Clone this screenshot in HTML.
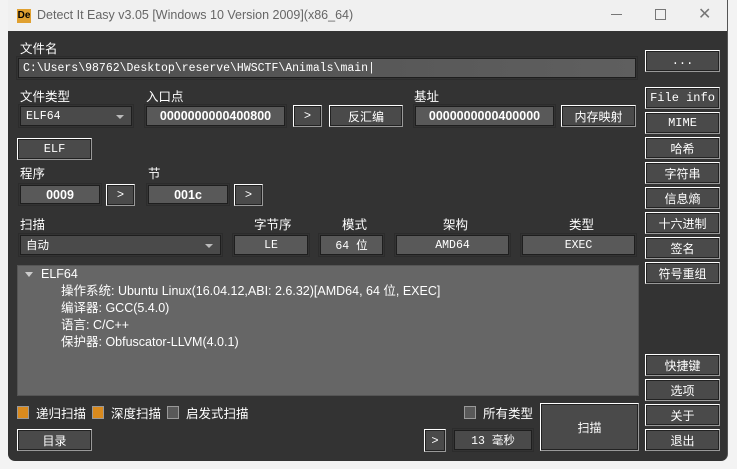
<!DOCTYPE html>
<html><head><meta charset="utf-8"><style>
*{box-sizing:border-box;margin:0;padding:0}
body{width:737px;height:469px;background:#f3f3f3;position:relative;overflow:hidden;font-family:"Liberation Sans","Noto Sans CJK SC",sans-serif;font-size:12px;color:#fff}
.win{position:absolute;left:8px;top:0;width:720px;height:461px;background:#333;border-radius:0 0 7px 7px;overflow:hidden;border-right:1px solid #555}
.tb{position:absolute;left:0;top:0;width:720px;height:31px;background:#f0f0f0;color:#666;font-size:12.5px}
.a{position:absolute}
.lbl{position:absolute;font-size:12.5px;color:#fff;font-family:"Noto Sans CJK SC",sans-serif;line-height:14px}
.btn{position:absolute;background:#4a4a4a;border:1px solid;border-color:#fff #999 #999 #fff;box-shadow:inset 0 0 0 1px #222;color:#fff;text-align:center;font-family:"Liberation Mono","Noto Sans CJK SC",monospace;font-size:12px;display:flex;align-items:center;justify-content:center}
.fld{position:absolute;background:#595959;border:1px solid #1e1e1e;outline:1px solid #2c2c2c;outline-offset:1px;color:#fff;display:flex;align-items:center;justify-content:center;font-family:"Liberation Mono","Noto Sans CJK SC",monospace;font-size:11.5px}
.bold{font-family:"Liberation Sans",sans-serif;font-weight:bold;font-size:12.5px}
.combo{justify-content:flex-start;padding-left:5px}
.combo::after{content:"";position:absolute;right:7px;top:8px;border:4px solid transparent;border-top:4px solid #bbb}
.cb{position:absolute;width:12px;height:13px;border:1px solid #999}
</style></head><body>
<div class="win">
<div class="tb">
 <div class="a" style="left:9px;top:9px;width:14px;height:14px;background:#e0a030;color:#000;font:bold 10px 'Liberation Sans';line-height:14px;text-align:center;">De</div>
 <div class="a" style="left:29px;top:8px;">Detect It Easy v3.05 [Windows 10 Version 2009](x86_64)</div>
 <div class="a" style="left:603px;top:14px;width:11px;height:1px;background:#777"></div>
 <div class="a" style="left:647px;top:9px;width:11px;height:11px;border:1px solid #777"></div>
 <div class="a" style="left:690px;top:4px;font-size:16px;color:#777">✕</div>
</div>
<div class="lbl" style="left:12px;top:41px">文件名</div>
<div class="fld" style="left:10px;top:58px;width:618px;height:20px;justify-content:flex-start;padding-left:4px;background:linear-gradient(90deg,#4e4e4e,#5f5f5f)">C:\Users\98762\Desktop\reserve\HWSCTF\Animals\main|</div>
<div class="btn" style="left:637px;top:50px;width:75px;height:22px">...</div>
<div class="lbl" style="left:12px;top:89px">文件类型</div>
<div class="fld combo" style="left:12px;top:106px;width:112px;height:20px;background:#4a4a4a">ELF64</div>
<div class="lbl" style="left:138px;top:89px">入口点</div>
<div class="fld bold" style="left:138px;top:106px;width:139px;height:20px">0000000000400800</div>
<div class="btn" style="left:285px;top:105px;width:29px;height:22px">&gt;</div>
<div class="btn" style="left:321px;top:105px;width:74px;height:22px">反汇编</div>
<div class="lbl" style="left:406px;top:89px">基址</div>
<div class="fld bold" style="left:407px;top:106px;width:139px;height:20px">0000000000400000</div>
<div class="btn" style="left:553px;top:105px;width:75px;height:22px">内存映射</div>
<div class="btn" style="left:637px;top:87px;width:75px;height:22px">File info</div>
<div class="btn" style="left:637px;top:112px;width:75px;height:22px">MIME</div>
<div class="btn" style="left:637px;top:137px;width:75px;height:22px">哈希</div>
<div class="btn" style="left:637px;top:162px;width:75px;height:22px">字符串</div>
<div class="btn" style="left:637px;top:187px;width:75px;height:22px">信息熵</div>
<div class="btn" style="left:637px;top:212px;width:75px;height:22px">十六进制</div>
<div class="btn" style="left:637px;top:237px;width:75px;height:22px">签名</div>
<div class="btn" style="left:637px;top:262px;width:75px;height:22px">符号重组</div>
<div class="btn" style="left:9px;top:138px;width:75px;height:22px">ELF</div>
<div class="lbl" style="left:12px;top:166px">程序</div>
<div class="fld bold" style="left:12px;top:185px;width:80px;height:19px">0009</div>
<div class="btn" style="left:98px;top:184px;width:29px;height:22px">&gt;</div>
<div class="lbl" style="left:140px;top:166px">节</div>
<div class="fld bold" style="left:140px;top:185px;width:80px;height:19px">001c</div>
<div class="btn" style="left:226px;top:184px;width:29px;height:22px">&gt;</div>
<div class="lbl" style="left:12px;top:217px">扫描</div>
<div class="fld combo" style="left:12px;top:235px;width:201px;height:20px;background:#4a4a4a;font-family:'Noto Sans CJK SC',sans-serif">自动</div>
<div class="lbl" style="left:246px;top:217px">字节序</div>
<div class="fld" style="left:226px;top:235px;width:74px;height:20px">LE</div>
<div class="lbl" style="left:334px;top:217px">模式</div>
<div class="fld" style="left:312px;top:235px;width:63px;height:20px">64 位</div>
<div class="lbl" style="left:435px;top:217px">架构</div>
<div class="fld" style="left:388px;top:235px;width:113px;height:20px">AMD64</div>
<div class="lbl" style="left:561px;top:217px">类型</div>
<div class="fld" style="left:514px;top:235px;width:113px;height:20px">EXEC</div>
<div class="a" style="left:9px;top:265px;width:622px;height:131px;background:#666;border:1px solid #555;font-size:12.5px;line-height:17px">
 <div class="a" style="left:7px;top:6px;border:4px solid transparent;border-top:5px solid #ccc"></div>
 <div class="a" style="left:23px;top:0px">ELF64</div>
 <div class="a" style="left:43px;top:17px;white-space:nowrap">操作系统: Ubuntu Linux(16.04.12,ABI: 2.6.32)[AMD64, 64 位, EXEC]</div>
 <div class="a" style="left:43px;top:34px">编译器: GCC(5.4.0)</div>
 <div class="a" style="left:43px;top:51px">语言: C/C++</div>
 <div class="a" style="left:43px;top:68px">保护器: Obfuscator-LLVM(4.0.1)</div>
</div>
<div class="btn" style="left:637px;top:354px;width:75px;height:22px">快捷键</div>
<div class="btn" style="left:637px;top:379px;width:75px;height:22px">选项</div>
<div class="btn" style="left:637px;top:404px;width:75px;height:22px">关于</div>
<div class="btn" style="left:637px;top:429px;width:75px;height:22px">退出</div>
<div class="cb" style="left:9px;top:406px;background:#d98a1e"></div>
<div class="lbl" style="left:28px;top:406px">递归扫描</div>
<div class="cb" style="left:84px;top:406px;background:#d98a1e"></div>
<div class="lbl" style="left:103px;top:406px">深度扫描</div>
<div class="cb" style="left:159px;top:406px;background:#595959"></div>
<div class="lbl" style="left:178px;top:406px">启发式扫描</div>
<div class="cb" style="left:456px;top:406px;background:#595959"></div>
<div class="lbl" style="left:475px;top:406px">所有类型</div>
<div class="btn" style="left:532px;top:403px;width:99px;height:48px">扫描</div>
<div class="btn" style="left:9px;top:429px;width:75px;height:22px">目录</div>
<div class="btn" style="left:416px;top:429px;width:22px;height:23px">&gt;</div>
<div class="fld" style="left:446px;top:430px;width:78px;height:20px;background:#4a4a4a">13 毫秒</div>
</div>
</body></html>
